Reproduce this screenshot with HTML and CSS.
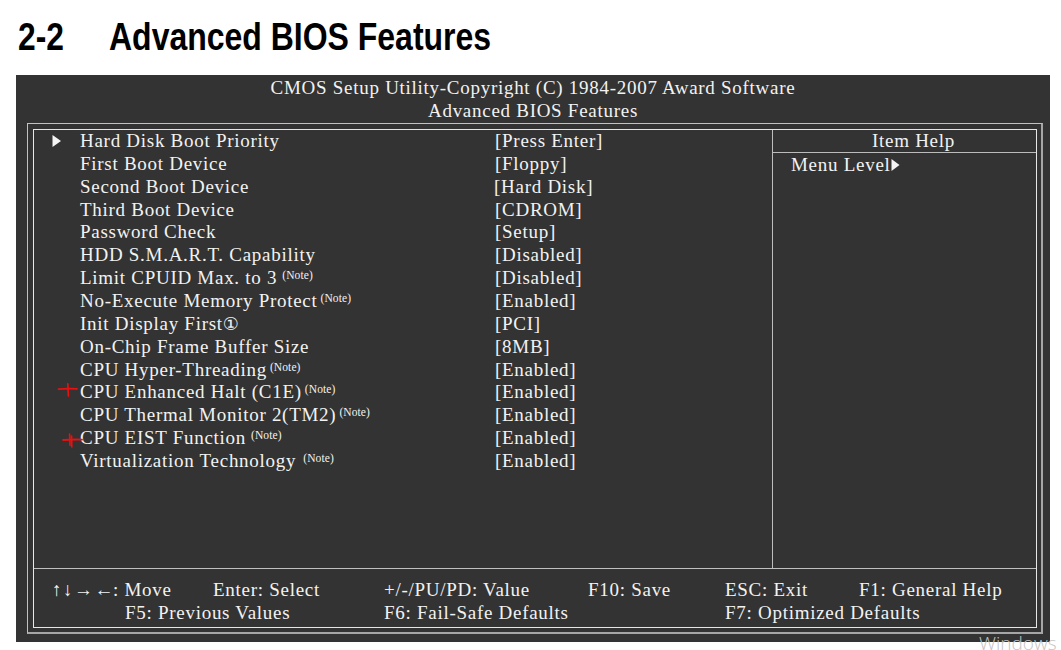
FILE: index.html
```html
<!DOCTYPE html>
<html>
<head>
<meta charset="utf-8">
<link rel="stylesheet" href="styles.css">
</head>
<body>
<h1 class="heading"><span class="num">2-2</span><span class="ttl">Advanced BIOS Features</span></h1>
<div class="panel">
  <div class="title">
    <div>CMOS Setup Utility-Copyright (C) 1984-2007 Award Software</div>
    <div>Advanced BIOS Features</div>
  </div>
  <div class="outer">
    <div class="inner">
      <div class="main">
        <div class="items">
          <div class="row"><span class="mark"><svg class="tri" width="10" height="22" viewBox="0 0 10 22"><polygon points="0.5,5 9,11 0.5,17" fill="#f4f4f4"/></svg></span><span class="label">Hard Disk Boot Priority</span><span class="value">[Press Enter]</span></div>
          <div class="row"><span class="mark"></span><span class="label">First Boot Device</span><span class="value">[Floppy]</span></div>
          <div class="row"><span class="mark"></span><span class="label">Second Boot Device</span><span class="value shift">[Hard Disk]</span></div>
          <div class="row"><span class="mark"></span><span class="label">Third Boot Device</span><span class="value">[CDROM]</span></div>
          <div class="row"><span class="mark"></span><span class="label">Password Check</span><span class="value">[Setup]</span></div>
          <div class="row"><span class="mark"></span><span class="label">HDD S.M.A.R.T. Capability</span><span class="value">[Disabled]</span></div>
          <div class="row"><span class="mark"></span><span class="label">Limit CPUID Max. to 3<sup class="note wide">(Note)</sup></span><span class="value">[Disabled]</span></div>
          <div class="row"><span class="mark"></span><span class="label">No-Execute Memory Protect<sup class="note">(Note)</sup></span><span class="value">[Enabled]</span></div>
          <div class="row"><span class="mark"></span><span class="label">Init Display First<span class="circ">①</span></span><span class="value">[PCI]</span></div>
          <div class="row"><span class="mark"></span><span class="label">On-Chip Frame Buffer Size</span><span class="value">[8MB]</span></div>
          <div class="row"><span class="mark"></span><span class="label">CPU Hyper-Threading<sup class="note">(Note)</sup></span><span class="value">[Enabled]</span></div>
          <div class="row"><span class="mark"><svg class="red" width="30" height="22" viewBox="0 0 30 22"><path d="M6.5 8.2 Q14 7.2 25 7.8" stroke="#e81010" stroke-width="1.8" fill="none" stroke-linecap="round"/><path d="M15.8 2.8 L16.4 15" stroke="#e81010" stroke-width="1.7" fill="none" stroke-linecap="round"/></svg></span><span class="label">CPU Enhanced Halt (C1E)<sup class="note">(Note)</sup></span><span class="value">[Enabled]</span></div>
          <div class="row"><span class="mark"></span><span class="label">CPU Thermal Monitor 2(TM2)<sup class="note">(Note)</sup></span><span class="value">[Enabled]</span></div>
          <div class="row"><span class="mark"><svg class="red" width="32" height="22" viewBox="0 0 32 22"><path d="M11 13 Q20 12.3 30 12.6" stroke="#e81010" stroke-width="1.8" fill="none" stroke-linecap="round"/><path d="M17.6 7 L18 18.5 M19.6 9 L19.8 20" stroke="#e81010" stroke-width="1.6" fill="none" stroke-linecap="round"/></svg></span><span class="label">CPU EIST Function<sup class="note wide">(Note)</sup></span><span class="value">[Enabled]</span></div>
          <div class="row"><span class="mark"></span><span class="label">Virtualization Technology<sup class="note wider">(Note)</sup></span><span class="value">[Enabled]</span></div>
        </div>
        <div class="help">
          <div class="help-head">Item Help</div>
          <div class="help-body">Menu Level<svg class="lvl" width="9" height="14" viewBox="0 0 9 14"><polygon points="0.5,1 8.5,7 0.5,13" fill="#f4f4f4"/></svg></div>
        </div>
      </div>
      <div class="footer">
        <span class="c-move"><span class="arrows">↑↓→←</span>: Move</span>
        <span class="c-enter">Enter: Select</span>
        <span class="c-value">+/-/PU/PD: Value</span>
        <span class="c-save">F10: Save</span>
        <span class="c-exit">ESC: Exit</span>
        <span class="c-help">F1: General Help</span>
        <span class="c-f5">F5: Previous Values</span>
        <span class="c-f6">F6: Fail-Safe Defaults</span>
        <span class="c-f7">F7: Optimized Defaults</span>
      </div>
    </div>
  </div>
</div>
<div class="watermark">Windows</div>
</body>
</html>
```
FILE: styles.css
```css
html, body {
  margin: 0;
  padding: 0;
  background: #ffffff;
  overflow: hidden;
  height: 650px;
}

.heading {
  margin: 0;
  padding: 17px 0 19px 18px;
  display: flex;
  font: bold 39px/39px "Liberation Sans", Arial, sans-serif;
  color: #000;
}
.num {
  display: inline-block;
  width: 91px;
  transform: scaleX(0.815);
  transform-origin: left center;
}
.ttl {
  display: inline-block;
  transform: scaleX(0.82);
  transform-origin: left center;
  white-space: nowrap;
}

.panel {
  margin-left: 16px;
  width: 1034px;
  height: 567px;
  box-sizing: border-box;
  padding-top: 1px;
  background: #333333;
  color: #f2f2f2;
  font-family: "Liberation Serif", "Times New Roman", serif;
  font-size: 19px;
  letter-spacing: 0.72px;
}

.title {
  text-align: center;
  line-height: 23px;
}

.outer {
  margin: 1px 7px 0 11px;
  border: 1px solid #c2c2c2;
  border-right: 2px solid #a6a6a6;
  border-bottom: 2px solid #a6a6a6;
  padding: 5px 4px 4px 5px;
}

.inner {
  border: 1px solid #e6e6e6;
}

.main {
  display: flex;
  height: 438px;
}

.items {
  width: 738px;
}

.row {
  display: flex;
  height: 22.86px;
  line-height: 22.86px;
  padding-left: 18px;
  white-space: nowrap;
}
.mark {
  width: 28px;
  flex: none;
  position: relative;
}
.tri {
  display: block;
}
.red {
  position: absolute;
  left: 0;
  top: 0;
  overflow: visible;
}
.label {
  width: 415px;
  flex: none;
}
.value.shift {
  margin-left: -1px;
}
.note {
  font-size: 11.5px;
  letter-spacing: 0.1px;
  vertical-align: 5px;
  line-height: 0;
  margin-left: 3px;
}
.note.wide {
  margin-left: 5px;
}
.note.wider {
  margin-left: 7px;
}
.circ {
  font-family: "DejaVu Sans", sans-serif;
  font-size: 18px;
  letter-spacing: 0;
}

.help {
  flex: 1;
  border-left: 1px solid #bdbdbd;
}
.help-head {
  height: 22px;
  line-height: 22px;
  border-bottom: 1px solid #bcbcbc;
  text-align: center;
  padding-left: 18px;
}
.help-body {
  padding-left: 18px;
  line-height: 23px;
}
.lvl {
  vertical-align: -1px;
}

.footer {
  border-top: 1px solid #c0c0c0;
  height: 59px;
  box-sizing: border-box;
  padding: 9px 0 0 18px;
  display: grid;
  grid-template-columns: 73px 88px 171px 204px 137px 134px 1fr;
  grid-template-rows: 23px 23px;
  line-height: 23px;
  white-space: nowrap;
}
.arrows {
  display: inline-block;
  width: 61px;
  letter-spacing: 1.5px;
}
.c-move { grid-column: 1 / 3; grid-row: 1; }
.c-enter { grid-column: 3; grid-row: 1; }
.c-value { grid-column: 4; grid-row: 1; }
.c-save { grid-column: 5; grid-row: 1; }
.c-exit { grid-column: 6; grid-row: 1; }
.c-help { grid-column: 7; grid-row: 1; }
.c-f5 { grid-column: 2 / 4; grid-row: 2; }
.c-f6 { grid-column: 4 / 6; grid-row: 2; }
.c-f7 { grid-column: 6 / 8; grid-row: 2; }

.watermark {
  position: absolute;
  left: 979px;
  top: 634px;
  font-family: "Open Sans", sans-serif;
  font-weight: 300;
  font-size: 19px;
  line-height: 19px;
  color: #c4c4c4;
}
```
